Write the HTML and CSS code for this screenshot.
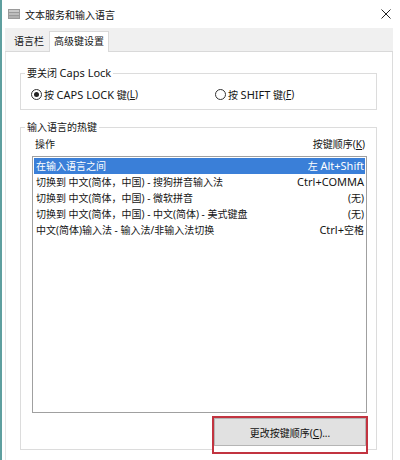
FILE: index.html
```html
<!DOCTYPE html>
<html lang="zh-CN">
<head>
<meta charset="utf-8">
<title>文本服务和输入语言</title>
<link rel="stylesheet" href="styles.css">
</head>
<body>
<div class="win">
  <div class="titlebar">
    <svg class="appicon" width="12" height="12" viewBox="0 0 12 12">
      <rect x="0" y="1" width="12" height="10" fill="#9a9a9a"/>
      <rect x="1" y="2" width="10" height="2" fill="#c9c9c9"/>
      <rect x="1" y="5" width="10" height="2" fill="#bdbdbd"/>
      <rect x="1" y="8" width="10" height="2" fill="#b0b0b0"/>
    </svg>
    <span class="title">文本服务和输入语言</span>
    <svg class="close" width="10" height="10" viewBox="0 0 10 10">
      <path d="M0.5 0.5 L9.5 9.5 M9.5 0.5 L0.5 9.5" stroke="#222" stroke-width="1" fill="none"/>
    </svg>
  </div>
  <div class="tabs">
    <div class="tab">语言栏</div>
    <div class="tab active">高级键设置</div>
  </div>
  <div class="panel">
    <fieldset class="group g1">
      <legend>要关闭 <span class="lat">Caps Lock</span></legend>
      <div class="radios">
        <label class="opt"><span class="radio on"></span>按 <span class="lat">CAPS LOCK</span> 键(<u>L</u>)</label>
        <label class="opt"><span class="radio"></span>按 <span class="lat">SHIFT</span> 键(<u>F</u>)</label>
      </div>
    </fieldset>
    <fieldset class="group g2">
      <legend>输入语言的热键</legend>
      <div class="head">
        <span>操作</span>
        <span>按键顺序(<u>K</u>)</span>
      </div>
      <div class="list">
        <div class="row sel"><span>在输入语言之间</span><span>左 <span class="lat">Alt+Shift</span></span></div>
        <div class="row"><span>切换到 中文(简体，中国) - 搜狗拼音输入法</span><span class="lat">Ctrl+COMMA</span></div>
        <div class="row"><span>切换到 中文(简体，中国) - 微软拼音</span><span>(无)</span></div>
        <div class="row"><span>切换到 中文(简体，中国) - 中文(简体) - 美式键盘</span><span>(无)</span></div>
        <div class="row"><span>中文(简体)输入法 - 输入法/非输入法切换</span><span><span class="lat">Ctrl+</span>空格</span></div>
      </div>
      <div class="mark">
        <button class="btn" type="button">更改按键顺序(<u>C</u>)...</button>
      </div>
    </fieldset>
  </div>
</div>
</body>
</html>
```

FILE: styles.css
```css
html, body {
  margin: 0;
  padding: 0;
  width: 400px;
  height: 460px;
  overflow: hidden;
  background: #ffffff;
}

.win {
  width: 400px;
  height: 460px;
  box-sizing: border-box;
  border-left: 2px solid #5e9f9f;
  display: flex;
  flex-direction: column;
  font-family: "Noto Sans", "Noto Sans CJK SC", sans-serif;
  font-size: 10px;
  color: #151515;
  background: #ffffff;
}

.titlebar {
  height: 28px;
  display: flex;
  align-items: center;
  flex: none;
}

.appicon {
  margin-left: 6px;
  flex: none;
}

.title {
  margin-left: 5px;
  font-size: 10px;
  color: #111;
  flex: 1;
}

.close {
  margin-right: 9px;
  flex: none;
}

.tabs {
  height: 24px;
  flex: none;
  box-sizing: border-box;
  background: #f0f0f0;
  border-bottom: 1px solid #d9d9d9;
  display: flex;
  align-items: flex-end;
  padding-left: 6px;
  margin-right: 7px;
  margin-left: 3px;
}

.tab {
  height: 20px;
  line-height: 18px;
  padding: 0 3px;
  box-sizing: border-box;
  margin-bottom: -1px;
}

.tab.active {
  height: 21px;
  background: #ffffff;
  border: 1px solid #d9d9d9;
  border-bottom: none;
  padding: 0 4px;
  line-height: 19px;
  margin-left: 2px;
}

.panel {
  flex: 1;
  margin: 0 7px 0 3px;
  border-left: 1px solid #e6e6e6;
  border-right: 1px solid #dcdcdc;
  background: #ffffff;
  padding: 13px 15px 0 14px;
  display: flex;
  flex-direction: column;
  min-height: 0;
}

.group {
  margin: 0;
  padding: 0 4px;
  border: 1px solid #dcdcdc;
  min-width: 0;
}

.group legend {
  padding: 0 2px;
  line-height: 16px;
  height: 16px;
}

.lat {
  font-size: 11px;
}

u {
  text-decoration: underline;
  text-underline-offset: 1px;
}

.g1 {
  padding-bottom: 6px;
}

.radios {
  margin-top: 4px;
  height: 18px;
  display: grid;
  grid-template-columns: 184px 1fr;
  align-items: center;
  padding-left: 6px;
}

.opt {
  display: flex;
  align-items: center;
  white-space: pre;
}

.radio {
  width: 9px;
  height: 9px;
  border: 1px solid #333;
  border-radius: 50%;
  margin-right: 2px;
  position: relative;
  flex: none;
  background: #fff;
}

.radio.on::after {
  content: "";
  position: absolute;
  left: 2px;
  top: 2px;
  width: 5px;
  height: 5px;
  border-radius: 50%;
  background: #222;
}

.g2 {
  margin-top: 9px;
  padding-bottom: 0;
  display: flex;
  flex-direction: column;
}

.head {
  margin-top: 1px;
  height: 16px;
  line-height: 16px;
  display: flex;
  justify-content: space-between;
  padding: 0 7px 0 10px;
}

.list {
  margin: 4px 5px 0 7px;
  height: 257px;
  box-sizing: border-box;
  border: 1px solid #a0a0a0;
  padding: 1px;
  background: #fff;
}

.row {
  height: 16px;
  line-height: 16px;
  display: flex;
  justify-content: space-between;
  padding: 0 1px 0 2px;
  white-space: nowrap;
}

.row.sel {
  background: #3a7fd8;
  color: #ffffff;
}

.mark {
  align-self: flex-end;
  margin: 3px 4px -5px 0;
  width: 156px;
  height: 38px;
  box-sizing: border-box;
  border: 2px solid #c23440;
  padding: 0;
  background: #fff;
  position: relative;
}

.btn {
  display: block;
  width: 100%;
  height: 28px;
  margin: 0;
  box-sizing: border-box;
  border: 1px solid #b5b5b5;
  background: #e1e1e1;
  font-family: "Noto Sans", "Noto Sans CJK SC", sans-serif;
  font-size: 10px;
  color: #111;
  padding: 0;
}
```
